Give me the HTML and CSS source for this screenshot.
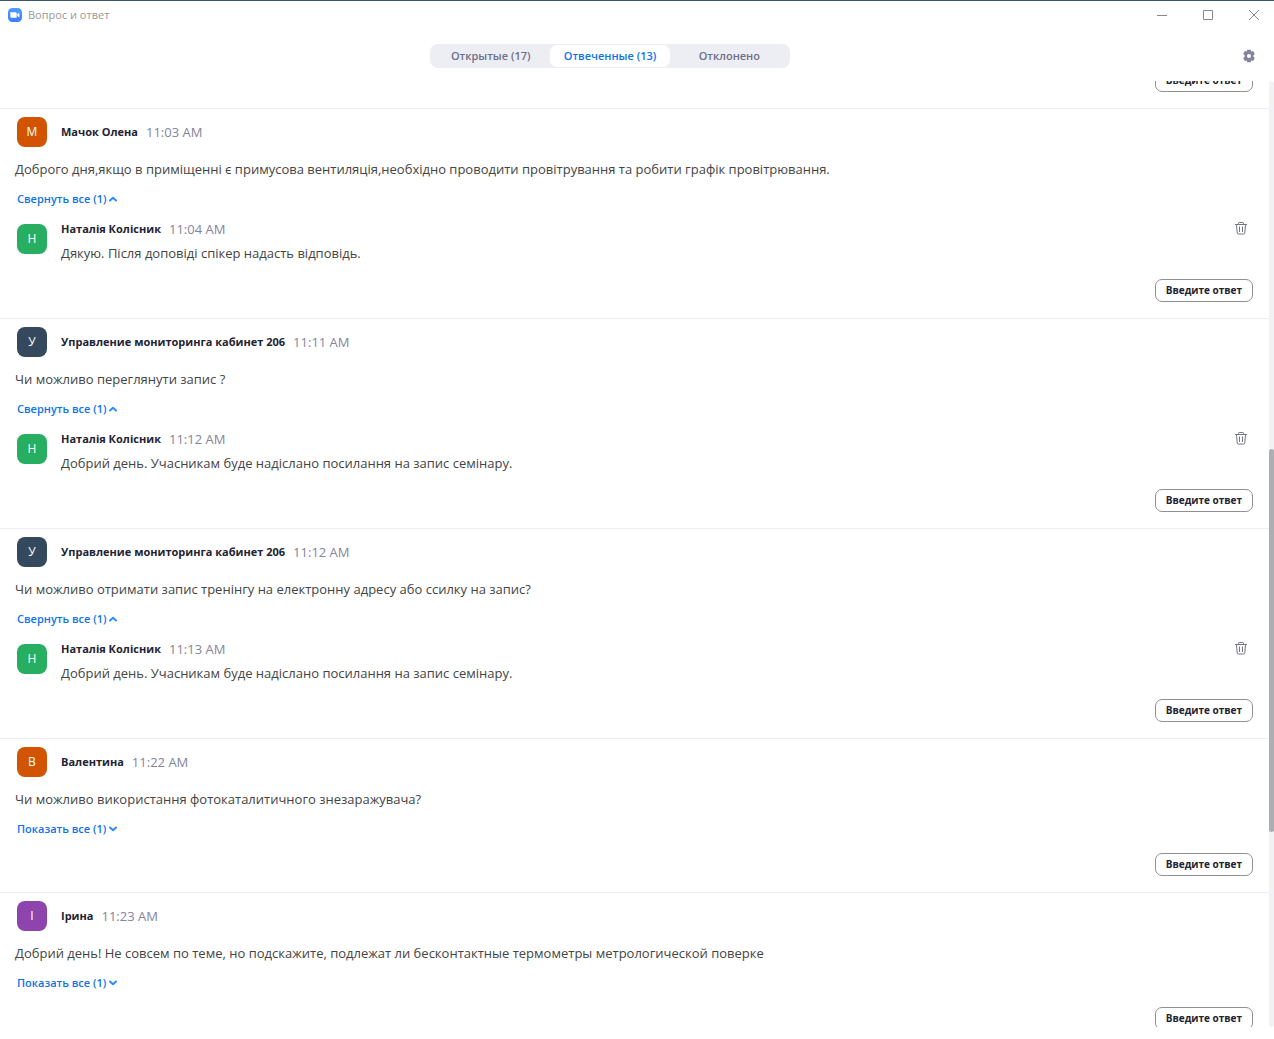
FILE: index.html
```html
<!DOCTYPE html>
<html lang="ru">
<head>
<meta charset="utf-8">
<meta name="viewport" content="width=device-width, initial-scale=1">
<title>Вопрос и ответ</title>
<link rel="stylesheet" href="styles.css">
</head>
<body>
<svg class="sprite" aria-hidden="true">
  <symbol id="trash" viewBox="0 0 12 13"><path d="M0 2.500h12M3.500 2V1.200q0-.7.7-.7h3.600q.7 0 .7.7V2M1.500 2.500l.7 8.500q.1 1 1 1h5.600q.9 0 1-1l.7-8.500M4.500 4.500v5.500M7.500 4.500v5.500" fill="none" stroke="#747487"/></symbol>
  <symbol id="up" viewBox="0 0 8 6"><path d="M1 4.500l3-2.700 3 2.700" fill="none" stroke="#2d8cff" stroke-width="2" stroke-linecap="round" stroke-linejoin="round"/></symbol>
  <symbol id="down" viewBox="0 0 8 6"><path d="M1 1.500l3 2.700 3-2.700" fill="none" stroke="#2d8cff" stroke-width="2" stroke-linecap="round" stroke-linejoin="round"/></symbol>
</svg>
<div class="window">
  <header class="titlebar">
    <svg class="logo" viewBox="0 0 14 14" aria-hidden="true">
      <defs><linearGradient id="blue" x2="0" y2="1"><stop stop-color="#4f9cff"/><stop offset="1" stop-color="#3a7dfb"/></linearGradient></defs>
      <rect width="14" height="14" rx="4.500" fill="url(#blue)"/>
      <path d="M2.300 4.300h5.400q1 0 1 1v4.400H3.500q-1.200 0-1.200-1.200zM9.200 6.200l2.200-1.600v4.800L9.200 7.900z" fill="#fff"/>
    </svg>
    <h1 class="title">Вопрос и ответ</h1>
    <div class="controls">
      <button class="control" type="button" aria-label="Свернуть"><svg viewBox="0 0 12 12"><path d="M1 6.500h10" stroke="#888"/></svg></button>
      <button class="control" type="button" aria-label="Развернуть"><svg viewBox="0 0 12 12"><path d="M1.500 1.500h9v9h-9z" fill="none" stroke="#888"/></svg></button>
      <button class="control" type="button" aria-label="Закрыть"><svg viewBox="0 0 12 12"><path d="M1 1l10 10M11 1L1 11" stroke="#888"/></svg></button>
    </div>
  </header>
  <nav class="toolbar">
    <div class="tabs">
      <button class="tab" type="button">Открытые (17)</button>
      <button class="tab tab-active" type="button">Отвеченные (13)</button>
      <button class="tab" type="button">Отклонено</button>
    </div>
    <button class="settings" type="button" aria-label="Настройки"><svg viewBox="0 0 14 14"><path d="M5.300.7h3.400l.5 1.900 1.900-.5 1.700 2.900L11.400 6.300v1.400l1.400 1.300-1.700 2.900-1.900-.5-.5 1.900H5.300l-.5-1.900-1.900.5L1.200 9l1.400-1.300V6.300L1.200 5l1.700-2.900 1.900.5z" fill="#84849a"/><circle cx="7" cy="7" r="2" fill="#fff"/></svg></button>
  </nav>
  <main class="content">
    <div class="questions">
      <article class="item item-cut">
        <div class="actions"><button class="answer" type="button">Введите ответ</button></div>
      </article>
      <article class="item">
        <div class="author"><span class="avatar orange">М</span><b class="name">Мачок Олена</b><time class="time">11:03 AM</time></div>
        <p class="question">Доброго дня,якщо в приміщенні є примусова вентиляція,необхідно проводити провітрування та робити графік провітрювання.</p>
        <button class="toggle" type="button">Свернуть все (1)<svg><use href="#up"/></svg></button>
        <div class="reply"><span class="avatar green">Н</span>
          <div class="body"><div class="meta"><b class="name">Наталія Колісник</b><time class="time">11:04 AM</time></div><p class="text">Дякую. Після доповіді спікер надасть відповідь.</p></div>
          <button class="delete" type="button" aria-label="Удалить"><svg><use href="#trash"/></svg></button></div>
        <div class="actions"><button class="answer" type="button">Введите ответ</button></div>
      </article>
      <article class="item">
        <div class="author"><span class="avatar navy">У</span><b class="name">Управление мониторинга кабинет 206</b><time class="time">11:11 AM</time></div>
        <p class="question">Чи можливо переглянути запис ?</p>
        <button class="toggle" type="button">Свернуть все (1)<svg><use href="#up"/></svg></button>
        <div class="reply"><span class="avatar green">Н</span>
          <div class="body"><div class="meta"><b class="name">Наталія Колісник</b><time class="time">11:12 AM</time></div><p class="text">Добрий день. Учасникам буде надіслано посилання на запис семінару.</p></div>
          <button class="delete" type="button" aria-label="Удалить"><svg><use href="#trash"/></svg></button></div>
        <div class="actions"><button class="answer" type="button">Введите ответ</button></div>
      </article>
      <article class="item">
        <div class="author"><span class="avatar navy">У</span><b class="name">Управление мониторинга кабинет 206</b><time class="time">11:12 AM</time></div>
        <p class="question">Чи можливо отримати запис тренінгу на електронну адресу або ссилку на запис?</p>
        <button class="toggle" type="button">Свернуть все (1)<svg><use href="#up"/></svg></button>
        <div class="reply"><span class="avatar green">Н</span>
          <div class="body"><div class="meta"><b class="name">Наталія Колісник</b><time class="time">11:13 AM</time></div><p class="text">Добрий день. Учасникам буде надіслано посилання на запис семінару.</p></div>
          <button class="delete" type="button" aria-label="Удалить"><svg><use href="#trash"/></svg></button></div>
        <div class="actions"><button class="answer" type="button">Введите ответ</button></div>
      </article>
      <article class="item">
        <div class="author"><span class="avatar orange">В</span><b class="name">Валентина</b><time class="time">11:22 AM</time></div>
        <p class="question">Чи можливо використання фотокаталитичного знезаражувача?</p>
        <button class="toggle" type="button">Показать все (1)<svg><use href="#down"/></svg></button>
        <div class="actions"><button class="answer" type="button">Введите ответ</button></div>
      </article>
      <article class="item">
        <div class="author"><span class="avatar purple">І</span><b class="name">Ірина</b><time class="time">11:23 AM</time></div>
        <p class="question">Добрий день! Не совсем по теме, но подскажите, подлежат ли бесконтактные термометры метрологической поверке</p>
        <button class="toggle" type="button">Показать все (1)<svg><use href="#down"/></svg></button>
        <div class="actions"><button class="answer" type="button">Введите ответ</button></div>
      </article>
    </div>
    <div class="track"><div class="thumb" style="top: 38.9%; height: 40.5%"></div></div>
  </main>
</div>
</body>
</html>
```
FILE: styles.css
```css
* { box-sizing: border-box; }

body {
  margin: 0;
  background: #fff;
  color: #444;
  font: 13px/20px "Open Sans", "Noto Sans", sans-serif;
}

button {
  padding: 0;
  border: 0;
  background: none;
  color: inherit;
  font: inherit;
}

p, h1 { margin: 0; }
svg { display: block; }
.sprite { display: none; }

.window {
  display: flex;
  flex-direction: column;
  height: 100vh;
  padding-bottom: 12px;
  border-top: 1px solid #3b566e;
}

.titlebar {
  display: flex;
  align-items: center;
  gap: 6px;
  height: 28px;
  padding-left: 8px;
}

.logo { width: 14px; height: 14px; }

.title {
  flex: 1;
  color: #999;
  font-size: 11px;
  font-weight: 400;
}

.controls { display: flex; }

.control {
  display: flex;
  align-items: center;
  justify-content: center;
  width: 46px;
  height: 28px;
}

.control:last-child { width: 40px; margin-left: 3px; }
.control svg { width: 12px; height: 12px; }

.toolbar {
  display: grid;
  grid-template-columns: 1fr 360px 1fr;
  align-items: center;
  height: 52px;
  padding: 2px 72px 0 18px;
}

.tabs {
  grid-column: 2;
  display: grid;
  grid-template-columns: repeat(3, 1fr);
  height: 24px;
  padding: 1px;
  border-radius: 8px;
  background: #ededf4;
}

.tab {
  border-radius: 7px;
  color: #6e7085;
  font-size: 11px;
  font-weight: 600;
  white-space: nowrap;
}

.tab-active { background: #fff; color: #0e72ed; }

.settings { justify-self: end; margin-right: -54px; }
.settings svg { width: 14px; height: 14px; }

.content {
  display: flex;
  flex: 1;
  min-height: 0;
}

.questions {
  flex: 1;
  min-width: 0;
  overflow: hidden;
}

.item {
  display: flex;
  flex-direction: column;
  align-items: flex-start;
  padding: 8px 16px 16px 15px;
  border-bottom: 1px solid #ededf4;
}

/* Scrolled partly out of view: only its lower edge shows. */
.item-cut {
  justify-content: flex-end;
  height: 28px;
  padding-top: 0;
  overflow: hidden;
}

.author {
  display: flex;
  align-items: center;
  padding-left: 2px;
}

.avatar {
  flex: none;
  width: 30px;
  height: 30px;
  margin-right: 14px;
  border-radius: 8px;
  color: #fff;
  font-size: 12px;
  line-height: 30px;
  text-align: center;
}

.orange { background: #d35400; }
.green { background: #27ae60; }
.navy { background: #34495e; }
.purple { background: #8e44ad; }

.name {
  margin-right: 8px;
  color: #232333;
  font-size: 11px;
  font-weight: 700;
}

.time { color: #84849a; }

.question { margin-top: 12px; }

.toggle {
  display: flex;
  align-items: center;
  gap: 3px;
  margin: 12px 0 0 2px;
  color: #0e72ed;
  font-size: 11px;
  font-weight: 600;
  line-height: 16px;
}

.toggle svg { width: 8px; height: 6px; }

.reply {
  display: flex;
  align-items: flex-start;
  align-self: stretch;
  margin-top: 12px;
  padding-left: 2px;
}

.reply .avatar { margin-top: 5px; }
.body { flex: 1; }
.meta { display: flex; align-items: center; }
.text { margin-top: 4px; }

.delete { padding: 3px 6px 0; }
.delete svg { width: 12px; height: 13px; }

.actions {
  flex: none;
  align-self: flex-end;
  margin-top: 16px;
}

.answer {
  display: block;
  height: 23px;
  padding: 0 10px 1px;
  border: 1px solid #909096;
  border-radius: 7px;
  color: #232333;
  font-size: 10px;
  font-weight: 700;
  line-height: 20px;
}

.track {
  position: relative;
  width: 5px;
  border-radius: 3px;
  background: #f1f1f6;
}

.thumb {
  position: absolute;
  width: 5px;
  border-radius: 3px;
  background: #adadb5;
}
```
